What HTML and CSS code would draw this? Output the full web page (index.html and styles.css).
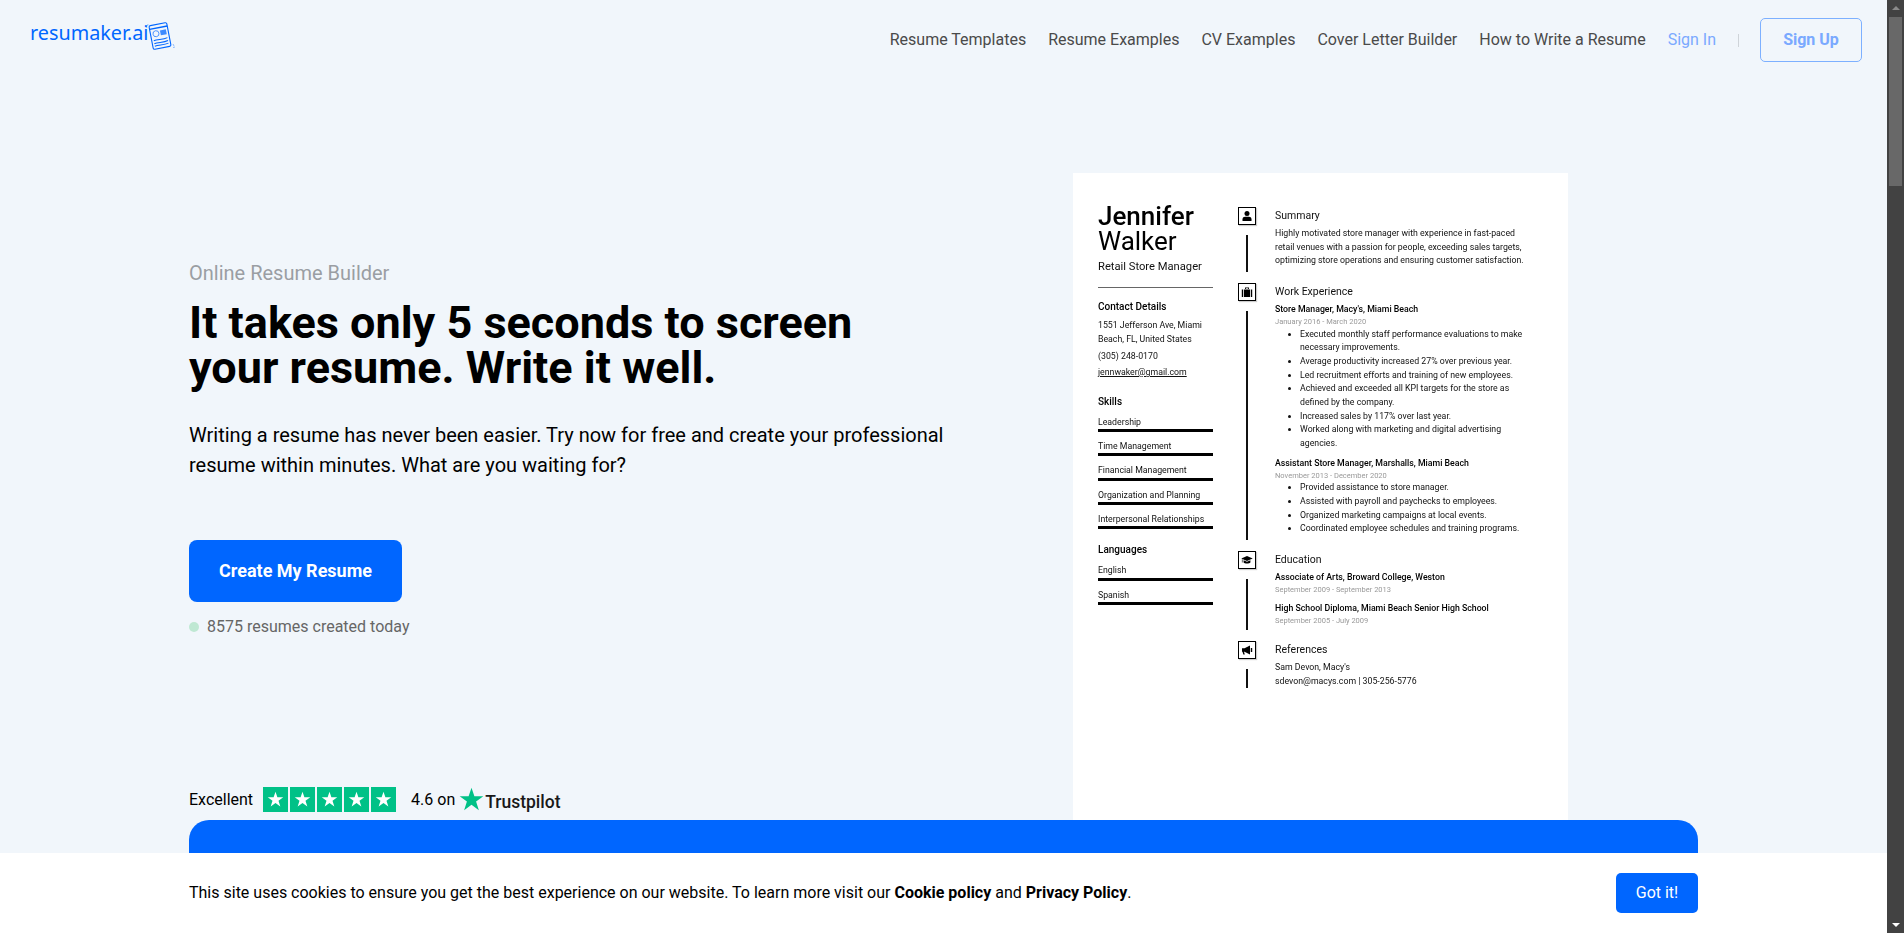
FILE: index.html
```html
<!DOCTYPE html>
<html lang="en">
  <head>
    <meta charset="UTF-8" />
    <title>Online Resume Builder</title>
    <link rel="stylesheet" href="styles.css">
  </head>
  <body>
    <svg class="defs" width="0" height="0">
      <symbol id="tp-star" viewBox="0 0 24 24">
        <path d="M12 2.2l2.4 7.1h7.4l-6 4.4 2.3 7.1-6.1-4.4-6.1 4.4 2.3-7.1-6-4.4h7.4z" />
      </symbol>
    </svg>

    <div class="window">
      <div class="viewport">
        <header class="topbar">
          <a class="logo" href="#">
            <span class="logo-text">resumaker.ai</span>
            <svg class="logo-icon" width="32" height="30" viewBox="0 0 32 30" fill="none" stroke="#0066ff">
              <g transform="rotate(-11 16 15)">
                <rect x="7" y="3" width="18" height="24" rx="1.5" stroke-width="1.1" />
                <path d="M7 6.5h18" stroke-width="1.4" />
                <circle cx="12.5" cy="12" r="3" stroke-width="0.9" opacity="0.7" />
                <rect x="17" y="9.5" width="6" height="5" fill="#0066ff" stroke="none" opacity="0.75" />
                <path d="M9 18.5c4-1 9 1 14-.5M9 21.5c4-1 9 1 14-.5M9 24c4-.8 9 .8 14-.4" stroke-width="1" />
              </g>
              <path d="M2 5l1 2M4 3l-.5 2M29 23l1 2M31 26l-2 .5" stroke-width="0.7" opacity="0.6" />
            </svg>
          </a>
          <nav class="nav">
            <a href="#">Resume Templates</a>
            <a href="#">Resume Examples</a>
            <a href="#">CV Examples</a>
            <a href="#">Cover Letter Builder</a>
            <a href="#">How to Write a Resume</a>
            <a class="sign-in" href="#">Sign In</a>
            <span class="nav-sep"></span>
            <a class="sign-up" href="#">Sign Up</a>
          </nav>
        </header>

        <main class="container">
          <section class="hero">
            <div class="hero-copy">
              <p class="eyebrow">Online Resume Builder</p>
              <h1>It takes only 5 seconds to screen your resume. Write it well.</h1>
              <p class="lead">Writing a resume has never been easier. Try now for free and create your professional resume within minutes. What are you waiting for?</p>
              <a class="cta" href="#">Create My Resume</a>
              <p class="counter"><span class="counter-dot"></span>8575 resumes created today</p>

              <div class="rating">
                <span>Excellent</span>
                <div class="stars">
                  <span class="star-box"><svg width="19" height="19"><use href="#tp-star" /></svg></span>
                  <span class="star-box"><svg width="19" height="19"><use href="#tp-star" /></svg></span>
                  <span class="star-box"><svg width="19" height="19"><use href="#tp-star" /></svg></span>
                  <span class="star-box"><svg width="19" height="19"><use href="#tp-star" /></svg></span>
                  <span class="star-box"><svg width="19" height="19"><use href="#tp-star" /></svg></span>
                </div>
                <span class="rating-score">4.6 on</span>
                <span class="trustpilot">
                  <svg class="tp-logo" width="29" height="29"><use href="#tp-star" /></svg>
                  <span class="tp-name">Trustpilot</span>
                </span>
              </div>
            </div>

            <div class="resume">
              <div class="cv-side">
                <div class="cv-name"><strong>Jennifer</strong><br>Walker</div>
                <div class="cv-role">Retail Store Manager</div>
                <div class="cv-divider"></div>

                <h4 class="cv-contact-title">Contact Details</h4>
                <p class="cv-address">1551 Jefferson Ave, Miami Beach, FL, United States</p>
                <p class="cv-phone">(305) 248-0170</p>
                <p class="cv-email">jennwaker@gmail.com</p>

                <h4 class="cv-skills-title">Skills</h4>
                <div class="skill">Leadership</div>
                <div class="skill">Time Management</div>
                <div class="skill">Financial Management</div>
                <div class="skill">Organization and Planning</div>
                <div class="skill">Interpersonal Relationships</div>

                <h4 class="cv-lang-title">Languages</h4>
                <div class="skill">English</div>
                <div class="skill">Spanish</div>
              </div>

              <div class="cv-main">
                <section class="cv-section">
                  <div class="cv-rail">
                    <span class="cv-icon">
                      <svg width="12" height="12" viewBox="0 0 12 12"><circle cx="6" cy="3.4" r="2.5" /><path d="M1.5 11V9.2C1.5 7.6 2.8 6.8 4 6.8h4c1.2 0 2.5.8 2.5 2.4V11z" /></svg>
                    </span>
                    <span class="cv-line"></span>
                  </div>
                  <div class="cv-body">
                    <h5>Summary</h5>
                    <p>Highly motivated store manager with experience in fast-paced retail venues with a passion for people, exceeding sales targets, optimizing store operations and ensuring customer satisfaction.</p>
                  </div>
                </section>

                <section class="cv-section">
                  <div class="cv-rail">
                    <span class="cv-icon">
                      <svg width="12" height="12" viewBox="0 0 12 12"><path d="M4 3V1.5h4V3h-.9v-.7H4.900V3zM.8 3.400h1.400v7.600H.8zM3 3.400h6v7.600H3zM9.800 3.400h1.400v7.600H9.800z" /></svg>
                    </span>
                    <span class="cv-line"></span>
                  </div>
                  <div class="cv-body">
                    <h5>Work Experience</h5>
                    <h6>Store Manager, Macy's, Miami Beach</h6>
                    <div class="cv-date">January 2016 - March 2020</div>
                    <ul>
                      <li>Executed monthly staff performance evaluations to make necessary improvements.</li>
                      <li>Average productivity increased 27% over previous year.</li>
                      <li>Led recruitment efforts and training of new employees.</li>
                      <li>Achieved and exceeded all KPI targets for the store as defined by the company.</li>
                      <li>Increased sales by 117% over last year.</li>
                      <li>Worked along with marketing and digital advertising agencies.</li>
                    </ul>
                    <h6 class="cv-next">Assistant Store Manager, Marshalls, Miami Beach</h6>
                    <div class="cv-date">November 2013 - December 2020</div>
                    <ul>
                      <li>Provided assistance to store manager.</li>
                      <li>Assisted with payroll and paychecks to employees.</li>
                      <li>Organized marketing campaigns at local events.</li>
                      <li>Coordinated employee schedules and training programs.</li>
                    </ul>
                  </div>
                </section>

                <section class="cv-section">
                  <div class="cv-rail">
                    <span class="cv-icon">
                      <svg width="12" height="12" viewBox="0 0 12 12"><path d="M6 2L.3 4.500 6 7l5.700-2.500z" /><path d="M2.600 6.300v2.200c1 1.300 5.800 1.300 6.800 0V6.300L6 7.800zM.9 5.200h.6v3.300H.9z" /></svg>
                    </span>
                    <span class="cv-line"></span>
                  </div>
                  <div class="cv-body">
                    <h5>Education</h5>
                    <h6>Associate of Arts, Broward College, Weston</h6>
                    <div class="cv-date">September 2009 - September 2013</div>
                    <h6 class="cv-next-edu">High School Diploma, Miami Beach Senior High School</h6>
                    <div class="cv-date">September 2005 - July 2009</div>
                  </div>
                </section>

                <section class="cv-section">
                  <div class="cv-rail">
                    <span class="cv-icon">
                      <svg width="12" height="12" viewBox="0 0 12 12"><path d="M1 4.300h2.500L9 1.500v9L3.500 7.700H3l.8 2.800H2.300L1.500 7.700H1zM9.800 4h1.400v4H9.800z" /></svg>
                    </span>
                    <span class="cv-line"></span>
                  </div>
                  <div class="cv-body">
                    <h5>References</h5>
                    <p>Sam Devon, Macy's<br>sdevon@macys.com | 305-256-5776</p>
                  </div>
                </section>
              </div>
            </div>
          </section>

          <section class="banner"></section>
        </main>

        <div class="cookie-bar">
          <p>This site uses cookies to ensure you get the best experience on our website. To learn more visit our <a href="#">Cookie policy</a> and <a href="#">Privacy Policy</a>.</p>
          <button type="button">Got it!</button>
        </div>
      </div>

      <div class="scrollbar">
        <span class="arrow-up"></span>
        <span class="thumb"></span>
        <span class="arrow-down"></span>
      </div>
    </div>
  </body>
</html>
```

FILE: styles.css
```css
* {
  box-sizing: border-box;
}

html,
body {
  margin: 0;
  height: 100%;
  overflow: hidden;
}

body {
  font-family: Roboto, Arial, sans-serif;
  background: #f1f6fb;
  color: #000;
}

a {
  color: inherit;
  text-decoration: none;
}

.defs {
  position: absolute;
}

.window {
  display: flex;
  height: 933px;
}

.viewport {
  position: relative;
  flex: 1;
  overflow: hidden;
}

/* top bar */
.topbar {
  display: flex;
  justify-content: space-between;
  height: 173px;
  padding: 18px 25px 0 30px;
}

.logo {
  display: flex;
  align-items: flex-start;
  height: 32px;
}

.logo-text {
  font-family: "Noto Sans", Roboto, sans-serif;
  font-size: 19.8px;
  line-height: 30px;
  color: #0066ff;
}

.logo-icon {
  margin-left: -4px;
  margin-top: 3px;
}

.nav {
  display: flex;
  align-items: center;
  gap: 22px;
  height: 44px;
  font-size: 16px;
  color: #4a4a4a;
}

.nav a {
  padding-bottom: 2px;
}

.sign-in {
  color: #7aa9ff;
}

.nav-sep {
  width: 1px;
  height: 13px;
  background: #cfd4d9;
}

.sign-up {
  display: flex;
  align-items: center;
  justify-content: center;
  width: 102px;
  height: 44px;
  margin-left: -1px;
  border: 1px solid #7db0ff;
  border-radius: 5px;
  color: #7aa9ff;
  font-weight: 700;
}

/* hero */
.container {
  width: 1509px;
  margin: 0 auto;
}

.hero {
  display: flex;
  height: 647px;
}

.hero-copy {
  display: flex;
  flex-direction: column;
  align-items: flex-start;
  width: 884px;
  padding-top: 89px;
  padding-bottom: 8px;
}

.eyebrow {
  margin: 0;
  font-size: 20px;
  line-height: 22px;
  color: #9a9ea3;
}

h1 {
  width: 720px;
  margin: 16px 0 0;
  font-size: 45px;
  line-height: 45px;
  font-weight: 700;
}

.lead {
  width: 780px;
  margin: 30px 0 0;
  font-size: 20px;
  line-height: 30px;
}

.cta {
  display: flex;
  align-items: center;
  justify-content: center;
  width: 213px;
  height: 62px;
  margin-top: 60px;
  padding-bottom: 2px;
  border-radius: 8px;
  background: #0066ff;
  color: white;
  font-size: 18px;
  font-weight: 700;
}

.counter {
  display: flex;
  align-items: center;
  gap: 8px;
  margin: 15px 0 0;
  font-size: 16px;
  line-height: 20px;
  color: #666;
}

.counter-dot {
  width: 10px;
  height: 10px;
  border-radius: 50%;
  background: #bfe8d3;
}

.rating {
  display: flex;
  align-items: center;
  margin-top: auto;
  height: 25px;
  font-size: 16px;
}

.stars {
  display: flex;
  gap: 2px;
  margin-left: 10px;
}

.star-box {
  display: flex;
  align-items: center;
  justify-content: center;
  width: 25px;
  height: 25px;
  background: #00c187;
  fill: white;
}

.rating-score {
  margin-left: 15px;
}

.trustpilot {
  display: flex;
  align-items: center;
  margin-left: 2px;
  font-size: 17.5px;
  font-weight: 500;
  color: #191919;
}

.tp-logo {
  fill: #00c187;
}

.tp-name {
  margin-left: -1px;
  padding-top: 5px;
}

/* resume preview */
.resume {
  display: flex;
  width: 495px;
  padding: 31px 0 0 25px;
  background: white;
  color: #111;
  font-size: 8.75px;
  line-height: 13.7px;
  overflow: hidden;
  filter: blur(0.3px);
}

.cv-side {
  width: 115px;
  flex-shrink: 0;
}

.cv-name {
  font-size: 26px;
  line-height: 25px;
  color: #000;
}

.cv-name strong {
  font-weight: 500;
}

.cv-role {
  margin-top: 6px;
  font-size: 11.2px;
  line-height: 14px;
}

.cv-divider {
  height: 1px;
  margin-top: 13px;
  background: #666;
}

h4 {
  margin: 0;
  font-size: 10px;
  line-height: 14px;
  font-weight: 500;
  color: #000;
}

.cv-contact-title {
  margin-top: 12px;
}

.cv-skills-title {
  margin-top: 15px;
  margin-bottom: 7px;
}

.cv-lang-title {
  margin-top: 14px;
  margin-bottom: 7px;
}

.cv-side p {
  margin: 0;
}

.cv-side .cv-address {
  margin-top: 5px;
}

.cv-side .cv-phone {
  margin-top: 4px;
}

.cv-side .cv-email {
  margin-top: 2px;
  text-decoration: underline;
}

.skill {
  height: 16.3px;
  margin-bottom: 8px;
  line-height: 13px;
  border-bottom: 3px solid #000;
}

.cv-main {
  flex: 1;
  margin-top: 3px;
  margin-left: 25px;
}

.cv-section {
  display: grid;
  grid-template-columns: 18px 1fr;
  column-gap: 19px;
  margin-bottom: 11px;
}

.cv-rail {
  display: flex;
  flex-direction: column;
  align-items: center;
}

.cv-icon {
  display: flex;
  align-items: center;
  justify-content: center;
  width: 18px;
  height: 18px;
  border: 1px solid #000;
  box-shadow: 1px 1px 1px #ccc;
}

.cv-icon svg {
  fill: #000;
}

.cv-line {
  flex: 1;
  width: 2px;
  margin-top: 10px;
  background: #111;
}

.cv-body {
  padding-top: 1px;
  padding-bottom: 4px;
}

.cv-section:last-child .cv-body {
  padding-bottom: 0;
}

h5 {
  margin: 0 0 3px;
  font-size: 10.5px;
  line-height: 16px;
  font-weight: 400;
}

h6 {
  margin: 0;
  font-size: 8.75px;
  line-height: 13.7px;
  font-weight: 500;
  color: #000;
}

.cv-next {
  margin-top: 6px;
}

.cv-next-edu {
  margin-top: 7.5px;
}

.cv-date {
  font-size: 7.5px;
  line-height: 10px;
  color: #999;
}

.cv-body p {
  margin: 0;
  width: 255px;
}

.cv-body ul {
  width: 255px;
  margin: 0.7px 0 0;
  padding-left: 25px;
}

/* blue band under the hero */
.banner {
  height: 300px;
  border-radius: 20px 20px 0 0;
  background: #0066ff;
}

/* cookie notice, sits over the page */
.cookie-bar {
  position: absolute;
  left: 0;
  right: 0;
  bottom: 0;
  display: flex;
  align-items: center;
  justify-content: space-between;
  height: 80px;
  padding: 0 189px;
  background: white;
  font-size: 16px;
}

.cookie-bar p {
  margin: 0 0 2px;
}

.cookie-bar a {
  font-weight: 700;
}

.cookie-bar button {
  width: 82px;
  height: 40px;
  padding: 0 0 2px;
  border: none;
  border-radius: 5px;
  background: #0066ff;
  color: white;
  font-family: inherit;
  font-size: 16px;
  cursor: pointer;
}

/* scrollbar as it appears in the page chrome */
.scrollbar {
  display: flex;
  flex-direction: column;
  align-items: center;
  width: 17px;
  background: #424242;
}

.arrow-up {
  width: 0;
  height: 0;
  margin-top: 6px;
  border: 4px solid transparent;
  border-top: 0;
  border-bottom: 4px solid #8a8a8a;
}

.thumb {
  width: 13px;
  height: 169px;
  margin-top: 7px;
  background: #686868;
}

.arrow-down {
  width: 0;
  height: 0;
  margin-top: auto;
  margin-bottom: 6px;
  border: 4px solid transparent;
  border-bottom: 0;
  border-top: 4px solid #fff;
}
```
